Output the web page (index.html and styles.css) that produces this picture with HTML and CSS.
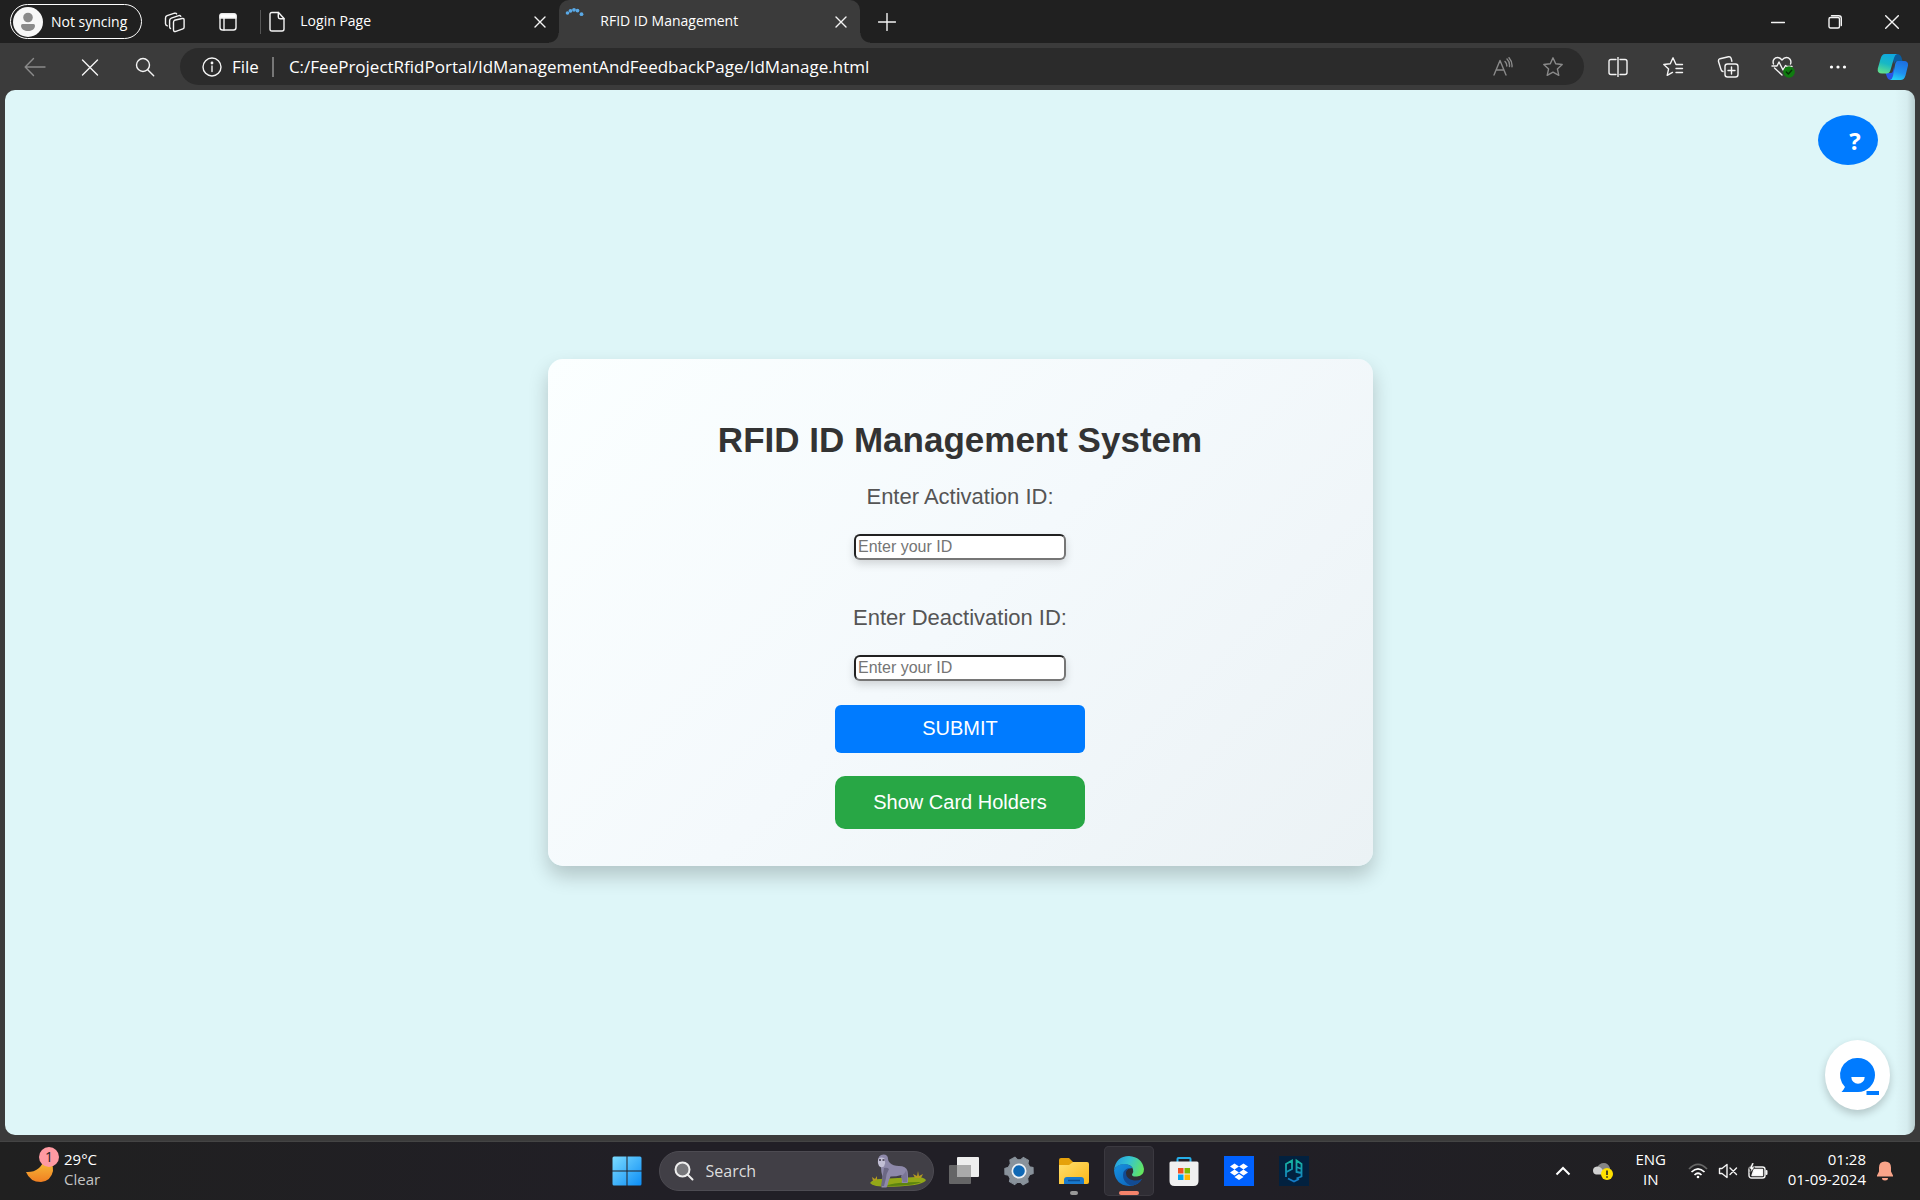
FILE: index.html
```html
<!DOCTYPE html>
<html lang="en">
<head>
<meta charset="utf-8">
<meta name="viewport" content="width=device-width, initial-scale=1">
<title>RFID ID Management</title>
<link rel="stylesheet" href="styles.css">
</head>
<body>
<header class="browser">
  <div class="tabstrip">
    <button class="profile" type="button">
      <svg width="30" height="30" viewBox="0 0 30 30" aria-hidden="true"><circle cx="15" cy="15" r="15" fill="#f7f7f7"/><circle cx="15" cy="10.500" r="4.800" fill="#8a8a8a"/><path d="M8 18.500q0-1.500 1.500-1.500h11q1.500 0 1.500 1.500c0 4-3.500 5.500-7 5.500s-7-1.500-7-5.500z" fill="#8a8a8a"/></svg>
      <span>Not syncing</span>
    </button>
    <button class="strip-btn" type="button" aria-label="Workspaces">
      <svg width="22" height="22" viewBox="0 0 22 22" class="line"><path d="M10.500 9.300l7.600-1.800q2-.4 2 1.500v7.300q0 1.300-1.200 1.600l-7 2.500q-2.400.7-2.400-1.700v-7.200q0-1.800 1-2.200z"/><path d="M6.500 17.500q-.9-.4-.9-1.700V9.500q0-1.800 1.700-2.400l7.500-2.500q1.400-.3 2 .7"/><path d="M3.300 14.800q-1.800-.5-1.800-2V7q0-1.700 1.600-2.300l7.500-2.500q1.500-.4 2 .7"/></svg>
    </button>
    <button class="strip-btn" type="button" aria-label="Tab actions">
      <svg width="20" height="20" viewBox="0 0 20 20" class="line"><rect x="2" y="2" width="16" height="16" rx="2.500"/><path d="M2 3.500q0-1.500 1.500-1.500h13q1.500 0 1.500 1.500V6H2z" fill="#fff"/><path d="M6 6v12"/></svg>
    </button>
    <div class="tab">
      <svg width="18" height="22" viewBox="0 0 18 22" class="line"><path d="M4 1.500h6.500l5.500 6V18q0 2-2 2H4q-2 0-2-2V3.500q0-2 2-2z"/><path d="M10.300 1.500V6q0 1.700 1.700 1.700h4"/></svg>
      <span class="tab-title">Login Page</span>
      <button class="tab-close" type="button" aria-label="Close Login Page"><svg width="12" height="12" viewBox="0 0 12 12" class="line"><path d="M1 1l10 10M11 1L1 11"/></svg></button>
    </div>
    <div class="tab tab-active">
      <svg class="spinner" width="20" height="26" viewBox="0 0 20 26" fill="#5aa9e6"><circle cx="2.500" cy="9" r="1.800"/><circle cx="5.500" cy="6.800" r="1.900"/><circle cx="9" cy="5.800" r="1.900"/><circle cx="12.500" cy="6.600" r="1.900"/><circle cx="16.500" cy="10.200" r="1.900"/></svg>
      <span class="tab-title">RFID ID Management</span>
      <button class="tab-close" type="button" aria-label="Close RFID ID Management"><svg width="12" height="12" viewBox="0 0 12 12" class="line"><path d="M1 1l10 10M11 1L1 11"/></svg></button>
    </div>
    <button class="strip-btn" type="button" aria-label="New tab"><svg width="18" height="18" viewBox="0 0 18 18" class="line"><path d="M9 .5v17M.5 9h17"/></svg></button>
    <div class="window-controls">
      <button type="button" aria-label="Minimize"><svg width="14" height="14" viewBox="0 0 14 14" class="line"><path d="M.5 7.500h13"/></svg></button>
      <button type="button" aria-label="Restore"><svg width="14" height="14" viewBox="0 0 14 14" class="line"><rect x="1" y="2.500" width="10.500" height="10.500" rx="1.500"/><path d="M3.500.7h7.200q2.600 0 2.600 2.600v7.200"/></svg></button>
      <button type="button" aria-label="Close window"><svg width="14" height="14" viewBox="0 0 14 14" class="line"><path d="M.7.7l12.600 12.600M13.300.7L.7 13.300"/></svg></button>
    </div>
  </div>
  <div class="toolbar">
    <button class="tool dim" type="button" aria-label="Back"><svg width="22" height="20" viewBox="0 0 22 20" class="line"><path d="M21 10H1.500M9.500 1.500L1.200 10l8.300 8.500"/></svg></button>
    <button class="tool" type="button" aria-label="Stop"><svg width="18" height="18" viewBox="0 0 18 18" class="line"><path d="M1.500 2l15 15M16.500 2l-15 15"/></svg></button>
    <button class="tool" type="button" aria-label="Search"><svg width="20" height="20" viewBox="0 0 20 20" class="line"><circle cx="8" cy="8" r="6.500"/><path d="M12.700 12.700l6 6"/></svg></button>
    <div class="address">
      <svg width="20" height="20" viewBox="0 0 20 20" class="line"><circle cx="10" cy="10" r="9"/><path d="M10 9v5.500"/><circle cx="10" cy="6" r=".7" fill="#fff"/></svg>
      <label class="scheme" for="url">File</label>
      <input id="url" class="url" type="text" value="C:/FeeProjectRfidPortal/IdManagementAndFeedbackPage/IdManage.html" spellcheck="false">
      <button class="tool dim" type="button" aria-label="Read aloud"><svg width="20" height="20" viewBox="0 0 20 20" class="line"><path d="M1 18L7 3.500 13 18M3 13h8M12 4.500q2 2 1.800 4.500M14 2q3 3 2.500 7.500M16 .7q3.500 4 3 9"/></svg></button>
      <button class="tool dim" type="button" aria-label="Add to favorites"><svg width="22" height="22" viewBox="0 0 22 22" class="line"><path d="M11 1.800l2.700 6 6.500.7-4.800 4.400 1.400 6.400-5.800-3.200-5.800 3.200 1.400-6.400L1.800 8.500l6.500-.7z"/></svg></button>
    </div>
    <button class="tool" type="button" aria-label="Split screen"><svg width="20" height="20" viewBox="0 0 20 20" class="line"><path d="M8 2.500H3q-2 0-2 2v11q0 2 2 2h5M12 2.500h5q2 0 2 2v11q0 2-2 2h-5M10 0v20"/></svg></button>
    <button class="tool" type="button" aria-label="Favorites"><svg width="22" height="22" viewBox="0 0 22 22" class="line"><path d="M20.500 8.500H14L11 1.800l-2.700 6-6.500.7 4.800 4.400-1.400 6.400 5.300-2.900M14 12.500h6.500M14 16.500h6.500"/></svg></button>
    <button class="tool" type="button" aria-label="Collections"><svg width="22" height="22" viewBox="0 0 22 22" class="line"><rect x="8" y="8" width="13" height="13" rx="2.500"/><path d="M14.500 11v7M11 14.500h7M6 15.500q-1.600-.3-2-2L1.500 5.500Q1.200 3.300 3 2.700l8.500-1.900q2-.3 2.600 1.400l.8 3"/></svg></button>
    <button class="tool" type="button" aria-label="Browser essentials"><svg width="24" height="22" viewBox="0 0 24 22" class="line"><path d="M2.500 8C1 4 4 1.500 6.500 1.500q2.500 0 4.500 2.500 2-2.500 4.500-2.500C18 1.500 21 4 19.500 8M3.500 12l7.500 7M1 10h5l2-4 4 8 2.500-4.500 1.500 1h5"/><circle cx="18" cy="16" r="5.800" fill="#107c10" stroke="none"/><path d="M15.300 16l2 2 3.400-3.800" stroke="#062f06"/></svg></button>
    <button class="tool" type="button" aria-label="Settings and more"><svg width="18" height="6" viewBox="0 0 18 6" fill="#fff"><circle cx="2.500" cy="3" r="1.600"/><circle cx="9" cy="3" r="1.600"/><circle cx="15.500" cy="3" r="1.600"/></svg></button>
    <button class="tool" type="button" aria-label="Copilot">
      <svg width="32" height="28" viewBox="0 0 32 28">
        <defs>
          <linearGradient id="cpA" x1=".6" y1="0" x2=".3" y2="1"><stop offset="0" stop-color="#0fa8e0"/><stop offset=".5" stop-color="#18b8c4"/><stop offset="1" stop-color="#62e08c"/></linearGradient>
          <linearGradient id="cpB" x1=".7" y1="0" x2=".4" y2="1"><stop offset="0" stop-color="#1c6fe0"/><stop offset=".6" stop-color="#2090f0"/><stop offset="1" stop-color="#25d0f5"/></linearGradient>
        </defs>
        <path d="M15 1h5q3.500 0 4.500 3.500L25.500 8h-5q-2.500 0-3.500 3z" fill="#0b5c9e"/>
        <path d="M8.500 20h5.500q1.500 0 2-2l1-4 1 13h-4q-3 0-4-3z" fill="#2a55e5"/>
        <path d="M8 1h12q-2 .5-3 4l-3.500 12q-1 3.500-4 3.500H5q-5 0-4.200-5L3.500 6Q4.800 1 8 1z" fill="url(#cpA)"/>
        <path d="M20.500 8H27q4.500 0 4 4.500l-2.500 10Q27.200 27 23.500 27H13q2.200-.5 3-4l2-11q.7-4 2.500-4z" fill="url(#cpB)"/>
      </svg>
    </button>
  </div>
</header>

<main class="page">
  <button class="help" type="button">?</button>
  <form class="card">
    <h1>RFID ID Management System</h1>
    <div class="field">
      <label for="activate">Enter Activation ID:</label>
      <input id="activate" type="text" placeholder="Enter your ID">
    </div>
    <div class="field field-last">
      <label for="deactivate">Enter Deactivation ID:</label>
      <input id="deactivate" type="text" placeholder="Enter your ID">
    </div>
    <button class="submit" type="button">SUBMIT</button>
    <button class="holders" type="button">Show Card Holders</button>
  </form>
  <button class="chat" type="button" aria-label="Chat">
    <svg width="40" height="40" viewBox="0 0 40 40"><path d="M20 3a17 17 0 1 1 0 34H3.500q2-2 3.500-5A17 17 0 0 1 20 3z" fill="#007bff"/><path d="M13.300 22h13.400a6.700 6.700 0 0 1-13.400 0z" fill="#fff"/><path d="M28.500 36H41v4H28.500z" fill="#007bff"/></svg>
  </button>
</main>

<footer class="taskbar">
  <button class="weather" type="button">
    <svg width="34" height="38" viewBox="0 0 34 38"><defs><linearGradient id="moon" x1="0" y1="0" x2="0" y2="1"><stop offset="0" stop-color="#f8c63c"/><stop offset="1" stop-color="#f07f22"/></linearGradient></defs><path d="M1 26q14 1 19-14 9 5 8 13-2 10-12 11Q5 36 1 26z" fill="url(#moon)"/><circle cx="24" cy="11" r="10" fill="#ff9aa2"/><text x="24" y="16" text-anchor="middle" class="badge-text">1</text></svg>
    <span class="weather-text"><span>29°C</span><span class="muted">Clear</span></span>
  </button>
  <nav class="apps">
    <button class="app" type="button" aria-label="Start"><svg width="30" height="30" viewBox="0 0 30 30"><defs><linearGradient id="win" x1="0" y1="0" x2="30" y2="30" gradientUnits="userSpaceOnUse"><stop offset="0" stop-color="#7ddcff"/><stop offset="1" stop-color="#0a8cf5"/></linearGradient></defs><path d="M2 .5h12.500v14H.5V2Q.500.5 2 .5zM15.500.5H28q1.500 0 1.500 1.500v12.500h-14zM.5 15.500h14v14H2Q.5 29.500.5 28zM15.500 15.500h14V28q0 1.500-1.500 1.500H15.500z" fill="url(#win)"/></svg></button>
    <label class="search">
      <svg width="20" height="20" viewBox="0 0 20 20" fill="#77777b" stroke="#eee" stroke-width="2"><circle cx="8.500" cy="8.500" r="7"/><path d="M13.500 13.500l5 5" stroke-linecap="round"/></svg>
      <input type="text" placeholder="Search">
      <svg width="56" height="34" viewBox="0 0 56 34">
        <path d="M0 29q3-4 10-4l36-2q8 0 10 3-2 5-27 6.500Q4 34 0 29z" fill="#93a818"/>
        <path d="M15 32q10-4 36-4-8 4-36 4z" fill="#5c8410"/>
        <path d="M45 24l-2-4 4 2 1-5 1 5 4-2-2 4zM3 27l-1-4 3 2 2-3v4z" fill="#b49a20"/>
        <path d="M8 7Q8 .5 13.500.5 18 .5 18 5q0 2 2 4 3 3 9 3 7 0 8.500 5 .7 3 .5 11 0 1-1 1h-5q-1 0 0-2l-.5-6q-5 1.500-11 1.500-2 4-3 9l-1 2h-5l1-11q-1.500-4-1.500-9-3-2-2-7z" fill="#8e89aa"/>
        <path d="M14 14q3-1 5 1-3 5-3 9l-2 8h-3l1.500-9z" fill="#6c6885"/>
        <path d="M31 22q4-2 5-6 1.500 4 1 12h-4q-1-3-2-6z" fill="#7a7596"/>
        <path d="M8.500 4.500q3-2 6 0 1.500 4-.5 8-3 1.500-5-.5-2-4-.5-7.500z" fill="#c2bfd5"/>
        <path d="M9 6h2M12.500 6h2" stroke="#3b3547" stroke-width="1.500"/>
      </svg>
    </label>
    <button class="app" type="button" aria-label="Task view"><svg width="30" height="30" viewBox="0 0 30 30"><rect x="8" y="1" width="22" height="20" rx="1" fill="#eee"/><rect y="9" width="22" height="19" rx="1" fill="#777" fill-opacity=".8"/><rect x="8" y="9" width="14" height="12" fill="#aaa"/></svg></button>
    <button class="app" type="button" aria-label="Settings"><svg width="30" height="30" viewBox="0 0 30 30"><path d="M11 4l1-3h6l1 3 3 2 3.500-1 3 5-2.300 3v4l2.300 3-3 5-3.500-1-3 2-1 3h-6l-1-3-3-2-3.500 1-3-5 2.300-3v-4l-2.300-3 3-5L8 6z" fill="#89929b" stroke="#89929b" stroke-linejoin="round" transform="rotate(30 15 15)"/><circle cx="15" cy="15" r="7.500" fill="#eef2f6"/><circle cx="15" cy="15" r="5.800" fill="#0f68b5"/></svg></button>
    <button class="app running" type="button" aria-label="File Explorer"><svg width="30" height="30" viewBox="0 0 30 30"><defs><linearGradient id="fold" x1="0" y1="0" x2="1" y2="1"><stop offset="0" stop-color="#ffdf70"/><stop offset="1" stop-color="#fcb816"/></linearGradient></defs><path d="M0 4q0-2 2-2h8l4 4v5H0z" fill="#e5a10b"/><path d="M0 9h10l4-3h14q2 0 2 2v18q0 2-2 2H0z" fill="url(#fold)"/><path d="M5 28v-4q0-3 3-3h14q3 0 3 3v4z" fill="#1879cd"/><path d="M9 24.500h12" stroke="#0c4d91" stroke-width="1.500"/></svg></button>
    <button class="app active" type="button" aria-label="Edge">
      <svg width="30" height="30" viewBox="0 0 30 30">
        <defs><linearGradient id="edA" x1="0" y1=".3" x2="1" y2=".6"><stop offset="0" stop-color="#249ee0"/><stop offset=".45" stop-color="#35c4d2"/><stop offset="1" stop-color="#65e65c"/></linearGradient><linearGradient id="edB" x1="0" y1="0" x2="1" y2="1"><stop offset="0" stop-color="#1792e0"/><stop offset="1" stop-color="#0b5cb5"/></linearGradient></defs>
        <path d="M0 14Q2 0 15 0q13 1 15 13 0 7-7 7.500-5 .5-5-2 2-2 1-5-1-5-8-5Q3 8 0 14z" fill="url(#edA)"/>
        <path d="M0 14q3-6 10-6 6 0 8.500 4Q11 12 11 18q1 8 10 8 4 0 7-3-4 7-13 7Q1 29 0 14z" fill="url(#edB)"/>
        <path d="M16 12q-4 0-6.500 4-2 7 3.500 11.500 3 2.500 6 2Q25 28 28 23q-4 2-8 1.500-8-1.500-8-7.500 0-3 4-5z" fill="#124b93"/>
      </svg>
    </button>
    <button class="app" type="button" aria-label="Store"><svg width="30" height="30" viewBox="0 0 30 30"><path d="M8.500 7V3q0-1 1-1h11q1 0 1 1v4" fill="none" stroke="#26aee8" stroke-width="2"/><path d="M.5 7q0-1.500 1.500-1.500h26q1.500 0 1.500 1.500v18q0 5-5 5h-19q-5 0-5-5z" fill="#f0f0f0"/><path d="M9 12h5.500v5.500H9z" fill="#f25022"/><path d="M15.500 12H21v5.500h-5.500z" fill="#7fba00"/><path d="M9 18.500h5.500V24H9z" fill="#00a4ef"/><path d="M15.500 18.500H21V24h-5.500z" fill="#ffb900"/></svg></button>
    <button class="app" type="button" aria-label="Dropbox"><svg width="30" height="30" viewBox="0 0 30 30"><path d="M0 0h30v30H0z" fill="#0061fe"/><path d="M10.500 7.500l4.500 3-4.500 3-4.500-3zM19.500 7.500l4.500 3-4.500 3-4.500-3zM10.500 13.500l4.500 3-4.500 3-4.500-3zM19.500 13.500l4.500 3-4.500 3-4.500-3zM15 18l4.500 3-4.500 3-4.500-3z" fill="#fff"/></svg></button>
    <button class="app" type="button" aria-label="Practice app"><svg width="30" height="30" viewBox="0 0 30 30"><defs><linearGradient id="pg" x1="0" y1="4" x2="0" y2="26" gradientUnits="userSpaceOnUse"><stop offset="0" stop-color="#17b8a0"/><stop offset="1" stop-color="#1478c8"/></linearGradient></defs><path d="M0 0h30v30H0z" fill="#02213f"/><path d="M7 21V8l6-3.500V13l-5.500 3M22.500 13l-5-2V4.500L22.500 8v12.500l-5 2M17.500 11v5l5 1M9 22.500l6 3 5-2.500" fill="none" stroke="url(#pg)" stroke-width="1.800"/></svg></button>
  </nav>
  <div class="tray">
    <button type="button" aria-label="Show hidden icons" class="w30"><svg width="16" height="10" viewBox="0 0 16 10" fill="none" stroke="#fff" stroke-width="2"><path d="M1.500 8.500L8 2l6.500 6.500"/></svg></button>
    <button type="button" aria-label="OneDrive" class="w50"><svg width="22" height="20" viewBox="0 0 22 20"><path d="M5 7q2-5 7-5 4 0 6 5v6H5z" fill="#858585"/><path d="M5 5.500q4 0 6 4l3 4H4Q1 13 1 9.500 1 6 5 5.500z" fill="#d0d0d0"/><circle cx="15" cy="13" r="6" fill="#ffe100"/><path d="M15 9.500v4.500M15 15.300v1.500" stroke="#222" stroke-width="1.600"/></svg></button>
    <button type="button" class="lang"><span>ENG</span><span>IN</span></button>
    <button type="button" class="status" aria-label="Network, volume and battery">
      <svg width="20" height="16" viewBox="0 0 20 16" fill="none" stroke="#fff" stroke-width="1.700"><path d="M1 6q9-9 18 0" stroke="#666"/><path d="M3.500 9q6.500-6.500 13 0M6.500 12q3.500-3.500 7 0"/><circle cx="10" cy="14" r="1.300" fill="#fff" stroke="none"/></svg>
      <svg width="20" height="16" viewBox="0 0 20 16" class="line"><path d="M1.500 5.500h2.500L9 1.500v13L4 10.500H1.500zM12 5l6.500 6.500M18.500 5L12 11.500"/></svg>
      <svg width="20" height="18" viewBox="0 0 20 18" class="line"><rect x="1" y="5" width="16" height="11" rx="2.500"/><path d="M6 7.500h8.500v6H4z" fill="#fff"/><path d="M18.500 9v3" stroke-width="2"/><path d="M4 1L1 7h2l-1 4 5-6H4.500L6 1z" fill="#fff" stroke="#202020" stroke-width=".6"/></svg>
    </button>
    <button type="button" class="clock"><span>01:28</span><span>01-09-2024</span></button>
    <button type="button" aria-label="Notifications" class="w30"><svg width="18" height="20" viewBox="0 0 18 20" fill="#f9a489"><path d="M9 .5q6 0 6 6v4l2 4v1H1v-1l2-4v-4q0-6 6-6zM6 17h6q0 2.500-3 2.500T6 17z"/></svg></button>
  </div>
</footer>
</body>
</html>
```

FILE: styles.css
```css
* { box-sizing: border-box; }

body {
  margin: 0;
  min-height: 100vh;
  display: flex;
  flex-direction: column;
  background: #3b3b3b;
  color: #fff;
  font-family: "Open Sans", "Noto Sans", sans-serif;
  font-size: 14px;
}

button {
  margin: 0;
  padding: 0;
  border: 0;
  background: none;
  color: inherit;
  font: inherit;
}

svg { display: block; flex: none; }

.line {
  fill: none;
  stroke: #f4f4f4;
  stroke-width: 1.4;
  stroke-linecap: round;
  stroke-linejoin: round;
}

.dim .line { stroke: #8a8a8a; }

/* Tab strip */
.tabstrip {
  height: 43px;
  display: flex;
  align-items: center;
  padding-left: 10px;
  background: #202020;
}

.profile {
  height: 35px;
  display: flex;
  align-items: center;
  gap: 8px;
  padding: 0 14px 0 2px;
  margin-right: 6px;
  border: 1px solid #fff;
  border-radius: 18px;
}

.profile,
.tab-title { white-space: nowrap; }

.strip-btn {
  width: 53px;
  height: 36px;
  display: grid;
  place-items: center;
}

.tab {
  width: 301px;
  height: 43px;
  display: flex;
  align-items: center;
  gap: 14px;
  margin-left: 4px;
  padding: 0 11px 0 10px;
  position: relative;
}

.tab:not(.tab-active)::before {
  content: "";
  position: absolute;
  left: 2px;
  top: 10px;
  width: 1px;
  height: 24px;
  background: #555;
}

.tab-title {
  flex: 1;
  padding-bottom: 2px;
}

.tab-close {
  width: 16px;
  height: 24px;
  display: grid;
  place-items: center;
}

.tab-active {
  gap: 15px;
  margin-left: 0;
  padding-left: 6px;
  background: #3b3b3b;
  border-radius: 10px 10px 0 0;
}

.spinner {
  align-self: flex-start;
  margin-top: 4px;
}

/* Concave feet at both sides of the selected tab */
.tab-active::before,
.tab-active::after {
  content: "";
  position: absolute;
  bottom: 0;
  width: 10px;
  height: 10px;
}

.tab-active::before {
  right: 100%;
  background: radial-gradient(circle at 0 0, #202020 9px, #3b3b3b 10px);
}

.tab-active::after {
  left: 100%;
  background: radial-gradient(circle at 100% 0, #202020 9px, #3b3b3b 10px);
}

.window-controls { display: flex; margin-left: auto; }

.window-controls button {
  width: 57px;
  height: 43px;
  display: grid;
  place-items: center;
}

/* Toolbar */
.toolbar {
  height: 47px;
  display: flex;
  align-items: center;
  gap: 5px;
  padding: 0 2px 0 10px;
}

.tool {
  width: 50px;
  height: 36px;
  flex: none;
  display: grid;
  place-items: center;
}

.address {
  flex: 1;
  height: 37px;
  display: flex;
  align-items: center;
  margin: 0 4px 0 5px;
  padding: 0 6px 0 22px;
  background: #2b2b2b;
  border-radius: 19px;
  font-size: 17px;
}

.scheme {
  margin-left: 10px;
  padding-right: 13px;
  border-right: 2px solid #777;
  line-height: 20px;
}

.url {
  flex: 1;
  min-width: 0;
  padding: 0 0 0 15px;
  border: 0;
  outline: 0;
  background: none;
  color: #fff;
  font: inherit;
}

/* Web page */
.page {
  flex: 1;
  display: flex;
  align-items: center;
  justify-content: center;
  position: relative;
  margin: 0 5px 6px;
  background: linear-gradient(to left, #b9cdcf, #d6edef 8px, #def6f8 20px);
  border-radius: 10px;
  font-family: "Liberation Sans", Arial, sans-serif;
}

.card {
  width: 100%;
  max-width: 825px;
  display: flex;
  flex-direction: column;
  align-items: center;
  padding: 60px 24px 37px;
  background: linear-gradient(135deg, #fbffff, #f4f9fc 50%, #ebf2f5);
  border-radius: 15px;
  box-shadow: 0 10px 20px rgba(0, 0, 0, 0.2);
}

.card h1 {
  margin: 0 0 23px;
  color: #333;
  font-size: 35px;
  line-height: 42px;
}

.field {
  display: flex;
  flex-direction: column;
  align-items: center;
  gap: 24px;
  margin-bottom: 45px;
}

.field-last { margin-bottom: 24px; }

.field label {
  color: #555;
  font-size: 22px;
  line-height: 26px;
}

.field input {
  width: 212px;
  height: 26px;
  padding: 1px 2px;
  border: 2px inset #767676;
  border-radius: 6px;
  background: #fff;
  box-shadow: 0 4px 8px rgba(0, 0, 0, 0.15);
  color: #333;
  font: 16px "Liberation Sans", Arial, sans-serif;
}

.field input::placeholder { color: #757575; }

.submit,
.holders {
  width: 250px;
  color: #fff;
  font-size: 20px;
}

.submit {
  height: 48px;
  margin-bottom: 23px;
  padding-bottom: 2px;
  background: #007bff;
  border-radius: 6px;
}

.holders {
  height: 53px;
  background: #28a745;
  border-radius: 10px;
}

.help {
  position: absolute;
  top: 25px;
  right: 37px;
  width: 60px;
  height: 50px;
  padding-left: 14px;
  background: #007bff;
  border-radius: 50%;
  font: bold 24px "Open Sans", sans-serif;
}

.chat {
  position: absolute;
  right: 25px;
  bottom: 25px;
  width: 65px;
  height: 70px;
  display: grid;
  place-items: center;
  background: #fff;
  border-radius: 50%;
  box-shadow: 0 4px 8px rgba(0, 0, 0, 0.2);
}

.chat svg { overflow: visible; }

/* Taskbar */
.taskbar {
  height: 59px;
  display: grid;
  grid-template-columns: 1fr auto 1fr;
  align-items: center;
  background: linear-gradient(to right, #202020, #211f26 35%, #211f26 65%, #202020);
  border-top: 1px solid #444;
  font-size: 15px;
  line-height: 20px;
}

.weather {
  display: flex;
  gap: 5px;
  margin: 0 0 4px 25px;
  justify-self: start;
}

.weather svg { margin-top: -3px; }

.badge-text {
  font: 14px "Open Sans", sans-serif;
  fill: #222;
}

.weather-text,
.lang,
.clock {
  display: flex;
  flex-direction: column;
}

.weather-text { text-align: left; }

.muted { color: #c4c4c4; }

.apps {
  display: flex;
  align-items: center;
  gap: 5px;
}

.app {
  width: 50px;
  height: 50px;
  display: grid;
  place-items: center;
  position: relative;
  border-radius: 5px;
}

.app.active {
  background: #2f2d34;
  box-shadow: inset 0 0 0 1px #3b3940;
}

.app.active::after,
.app.running::after {
  content: "";
  position: absolute;
  bottom: 1px;
  width: 20px;
  height: 4px;
  background: #f5836b;
  border-radius: 2px;
}

.app.running::after { width: 8px; background: #999; }

.search {
  width: 275px;
  height: 40px;
  display: flex;
  align-items: center;
  gap: 12px;
  margin-left: 2px;
  padding: 0 7px 0 14px;
  background: #413f46;
  border: 1px solid #4d4b52;
  border-radius: 20px;
}

.search input {
  flex: 1;
  min-width: 0;
  padding: 0;
  border: 0;
  outline: 0;
  background: none;
  color: #ddd;
  font: 16px "Open Sans", sans-serif;
}

.search input::placeholder { color: #ddd; }

.tray {
  display: flex;
  align-items: center;
  justify-content: flex-end;
  padding-right: 20px;
}

.tray button { flex: none; }

.w30,
.w50 {
  display: grid;
  place-items: center;
  height: 40px;
}

.w30 { width: 30px; }

.w50 { width: 50px; }

.lang {
  width: 46px;
  align-items: center;
  margin-bottom: 4px;
}

.status {
  width: 100px;
  display: flex;
  align-items: center;
  gap: 10px;
  margin-left: 14px;
}

.clock {
  align-items: flex-end;
  margin: 0 4px 4px 0;
}
```
